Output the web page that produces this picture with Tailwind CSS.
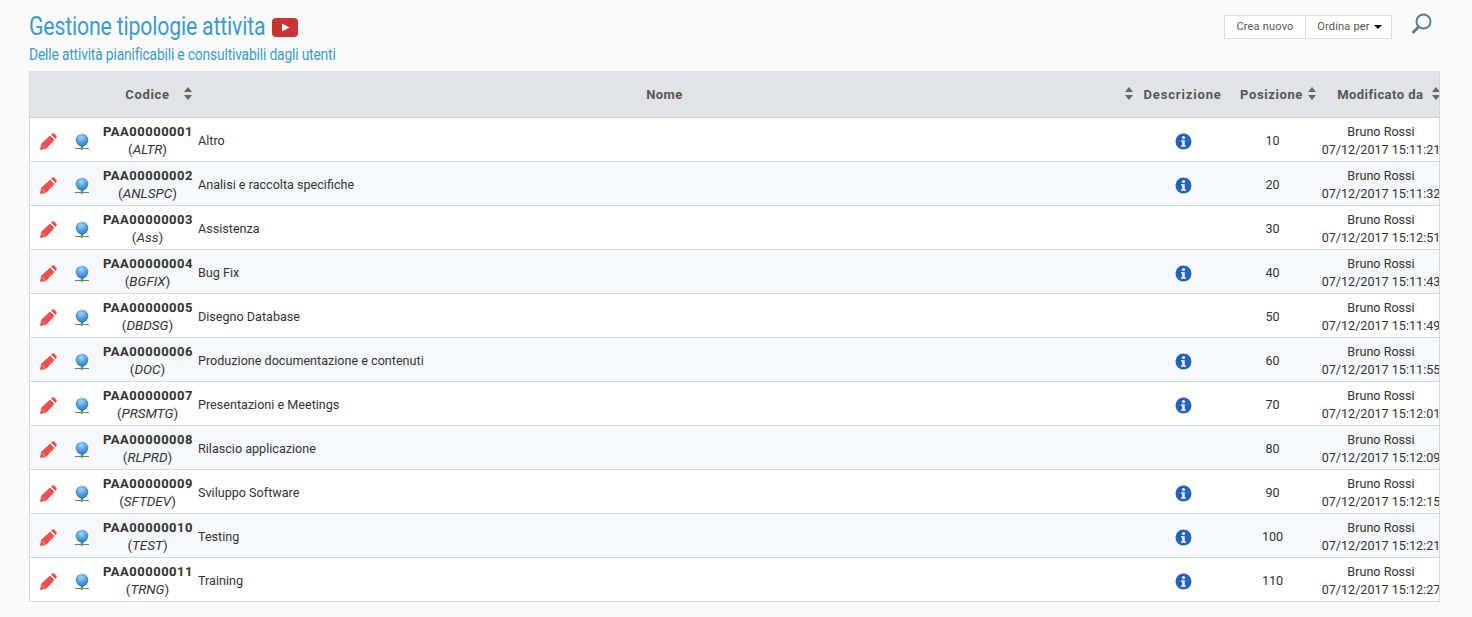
<!DOCTYPE html>
<html lang="en">
<head>
    <meta charset="UTF-8">
    <meta name="viewport" content="width=device-width, initial-scale=1.0">
    <title>Gestione tipologie attivita</title>
    <script src="https://cdn.jsdelivr.net/npm/@tailwindcss/browser@4"></script>
</head>
<body class="bg-[#fafafa] min-h-screen overflow-hidden font-['Roboto',sans-serif] text-[#333]">
    <div class="pl-[29px] pr-[39px] pt-[13px]">
        <!-- Page header -->
        <div class="flex justify-between h-[58px]">
            <div>
                <div class="flex items-center h-[28px] gap-[6px]">
                    <div class="w-[237px]"><h1 class="inline-block origin-left scale-x-[0.85] text-[25px] leading-[28px] font-normal text-[#3b9ad0] tracking-[-0.2px] whitespace-nowrap">Gestione tipologie attivita</h1></div>
                    <svg width="26" height="19" viewBox="0 0 26 19"><rect width="26" height="19" rx="4" fill="#cb3234"/><path d="M10 5.5l7.5 4-7.5 4z" fill="#fff"/></svg>
                </div>
                <p class="origin-left scale-x-[0.865] text-[16px] leading-[20px] mt-[4px] font-normal text-[#3b9ad0] tracking-[-0.2px] whitespace-nowrap">Delle attività pianificabili e consultivabili dagli utenti</p>
            </div>
            <div class="flex items-start">
                <div class="flex mt-[2px] h-[24px] bg-white border border-[#ddd] text-[11px] text-[#555] tracking-[0.2px]">
                    <button class="w-[81px] border-r border-[#ddd] text-center">Crea nuovo</button>
                    <button class="w-[85px] pl-[2px] flex items-center justify-center gap-[4px]">Ordina per <span class="w-0 h-0 border-x-[4px] border-x-transparent border-t-[4px] border-t-black"></span></button>
                </div>
                <svg class="ml-[19px]" width="22" height="22" viewBox="0 0 22 22" fill="none" stroke="#5c7d97"><circle cx="12.5" cy="8.5" r="7" stroke-width="2"/><path d="M7.5 14l-5 5" stroke-width="3" stroke-linecap="round"/></svg>
            </div>
        </div>

        <!-- Activity types table -->
        <div class="w-[1411px] overflow-hidden border-l border-r border-b border-[#d5d8db]">
            <table class="table-fixed border-collapse w-[1415px] text-[12.6px]">
                <colgroup>
                    <col class="w-[34px]"><col class="w-[33px]"><col class="w-[95px]"><col class="w-[945px]"><col class="w-[85px]"><col class="w-[95px]"><col class="w-[128px]">
                </colgroup>
                <thead>
                    <tr class="h-[46px] bg-[#e1e4e7] border-b border-[#d0d3d6] text-[#555] font-bold text-[13px]">
                        <th></th>
                        <th class="border-r border-[#dfe1e4]"></th>
                        <th class="relative border-r border-[#dfe1e4] pt-[1px] pl-[6px] tracking-[0.7px]">Codice<span class="absolute right-[0px] top-[16px] sort"></span></th>
                        <th class="relative border-r border-[#dfe1e4] pt-[1px] tracking-[0.4px]">Nome<span class="absolute right-[4px] top-[16px] sort"></span></th>
                        <th class="border-r border-[#dfe1e4] pt-[1px] pl-[6px] tracking-[0.85px] whitespace-nowrap">Descrizione</th>
                        <th class="relative border-r border-[#dfe1e4] pt-[1px] pl-[4px] tracking-[0.6px] whitespace-nowrap">Posizione<span class="absolute right-[1px] top-[16px] sort"></span></th>
                        <th class="relative pt-[1px] pr-[2px] tracking-[0.45px] whitespace-nowrap">Modificato da<span class="absolute right-[5px] top-[16px] sort"></span></th>
                    </tr>
                </thead>
                <tbody id="rows"></tbody>
            </table>
        </div>
    </div>

    <script>
        const sortIcon = '<svg width="8" height="13" viewBox="0 0 8 13" fill="#666"><path d="M4 0l4 5H0z"/><path d="M4 13L0 8h8z"/></svg>';
        document.querySelectorAll(".sort").forEach(el => el.innerHTML = sortIcon);

        const pencil = '<svg class="ml-[10px] mt-[1px]" width="17" height="17" viewBox="0 0 17 17"><path d="M0 17l1-6L10 2.5 14.5 7 6 16z" fill="#f0504d"/><path d="M11 1.5L12.2 .6a1.6 1.6 0 0 1 2.1 0l2.1 2.1a1.6 1.6 0 0 1 0 2.1L15.5 6z" fill="#f0504d"/><path d="M1.4 11.8l3.8 3.8" stroke="#fbb" stroke-width=".7"/></svg>';
        const globe = '<svg class="ml-[10px] mt-[1px]" width="16" height="18" viewBox="0 0 16 18"><defs><radialGradient id="g" cx="45%" cy="30%" r="70%"><stop offset="0" stop-color="#a2d4f5"/><stop offset="1" stop-color="#2277c8"/></radialGradient></defs><circle cx="8" cy="7" r="6.3" fill="url(#g)"/><path d="M1 15.5h14" stroke="#777" stroke-width="1"/><rect x="6.7" y="13" width="2.6" height="1.6" fill="#666"/><circle cx="8" cy="15.5" r="1.4" fill="#3eb23e"/></svg>';
        const info = '<svg class="ml-[38px]" width="17" height="17" viewBox="0 0 17 17"><circle cx="8.5" cy="8.5" r="8" fill="#2663b8"/><circle cx="8.5" cy="4.5" r="1.5" fill="#fff"/><path d="M6 7.2h3.7v5.3h1.2v1.3H6v-1.3h1.3V8.5H6z" fill="#fff"/></svg>';

        const data = [
            ["PAA00000001", "ALTR", "Altro", true, 10, "15:11:21"],
            ["PAA00000002", "ANLSPC", "Analisi e raccolta specifiche", true, 20, "15:11:32"],
            ["PAA00000003", "Ass", "Assistenza", false, 30, "15:12:51"],
            ["PAA00000004", "BGFIX", "Bug Fix", true, 40, "15:11:43"],
            ["PAA00000005", "DBDSG", "Disegno Database", false, 50, "15:11:49"],
            ["PAA00000006", "DOC", "Produzione documentazione e contenuti", true, 60, "15:11:55"],
            ["PAA00000007", "PRSMTG", "Presentazioni e Meetings", true, 70, "15:12:01"],
            ["PAA00000008", "RLPRD", "Rilascio applicazione", false, 80, "15:12:09"],
            ["PAA00000009", "SFTDEV", "Sviluppo Software", true, 90, "15:12:15"],
            ["PAA00000010", "TEST", "Testing", true, 100, "15:12:21"],
            ["PAA00000011", "TRNG", "Training", true, 110, "15:12:27"]
        ];

        document.getElementById("rows").innerHTML = data.map((r, i) => `
            <tr class="h-[44px] border-b border-[#d5d8db] last:border-b-0 ${i % 2 ? 'bg-[#f5f9fd]' : 'bg-white'}">
                <td class="pt-[4px]">${pencil}</td>
                <td class="pt-[4px]">${globe}</td>
                <td class="pt-[4px] pl-[6px] text-center leading-[18px] whitespace-nowrap"><b class="text-[13px] tracking-[0.5px]">${r[0]}</b><br><span class="relative top-[-1px] text-[13.5px]">(<i>${r[1]}</i>)</span></td>
                <td class="pt-[4px] pl-[6px]">${r[2]}</td>
                <td class="pt-[4px]">${r[3] ? info : ''}</td>
                <td class="pt-[4px] pl-[6px] text-center">${r[4]}</td>
                <td class="pt-[4px] text-center leading-[18px] whitespace-nowrap">Bruno Rossi<br>07/12/2017 ${r[5]}</td>
            </tr>`).join("");
    </script>
</body>
</html>
